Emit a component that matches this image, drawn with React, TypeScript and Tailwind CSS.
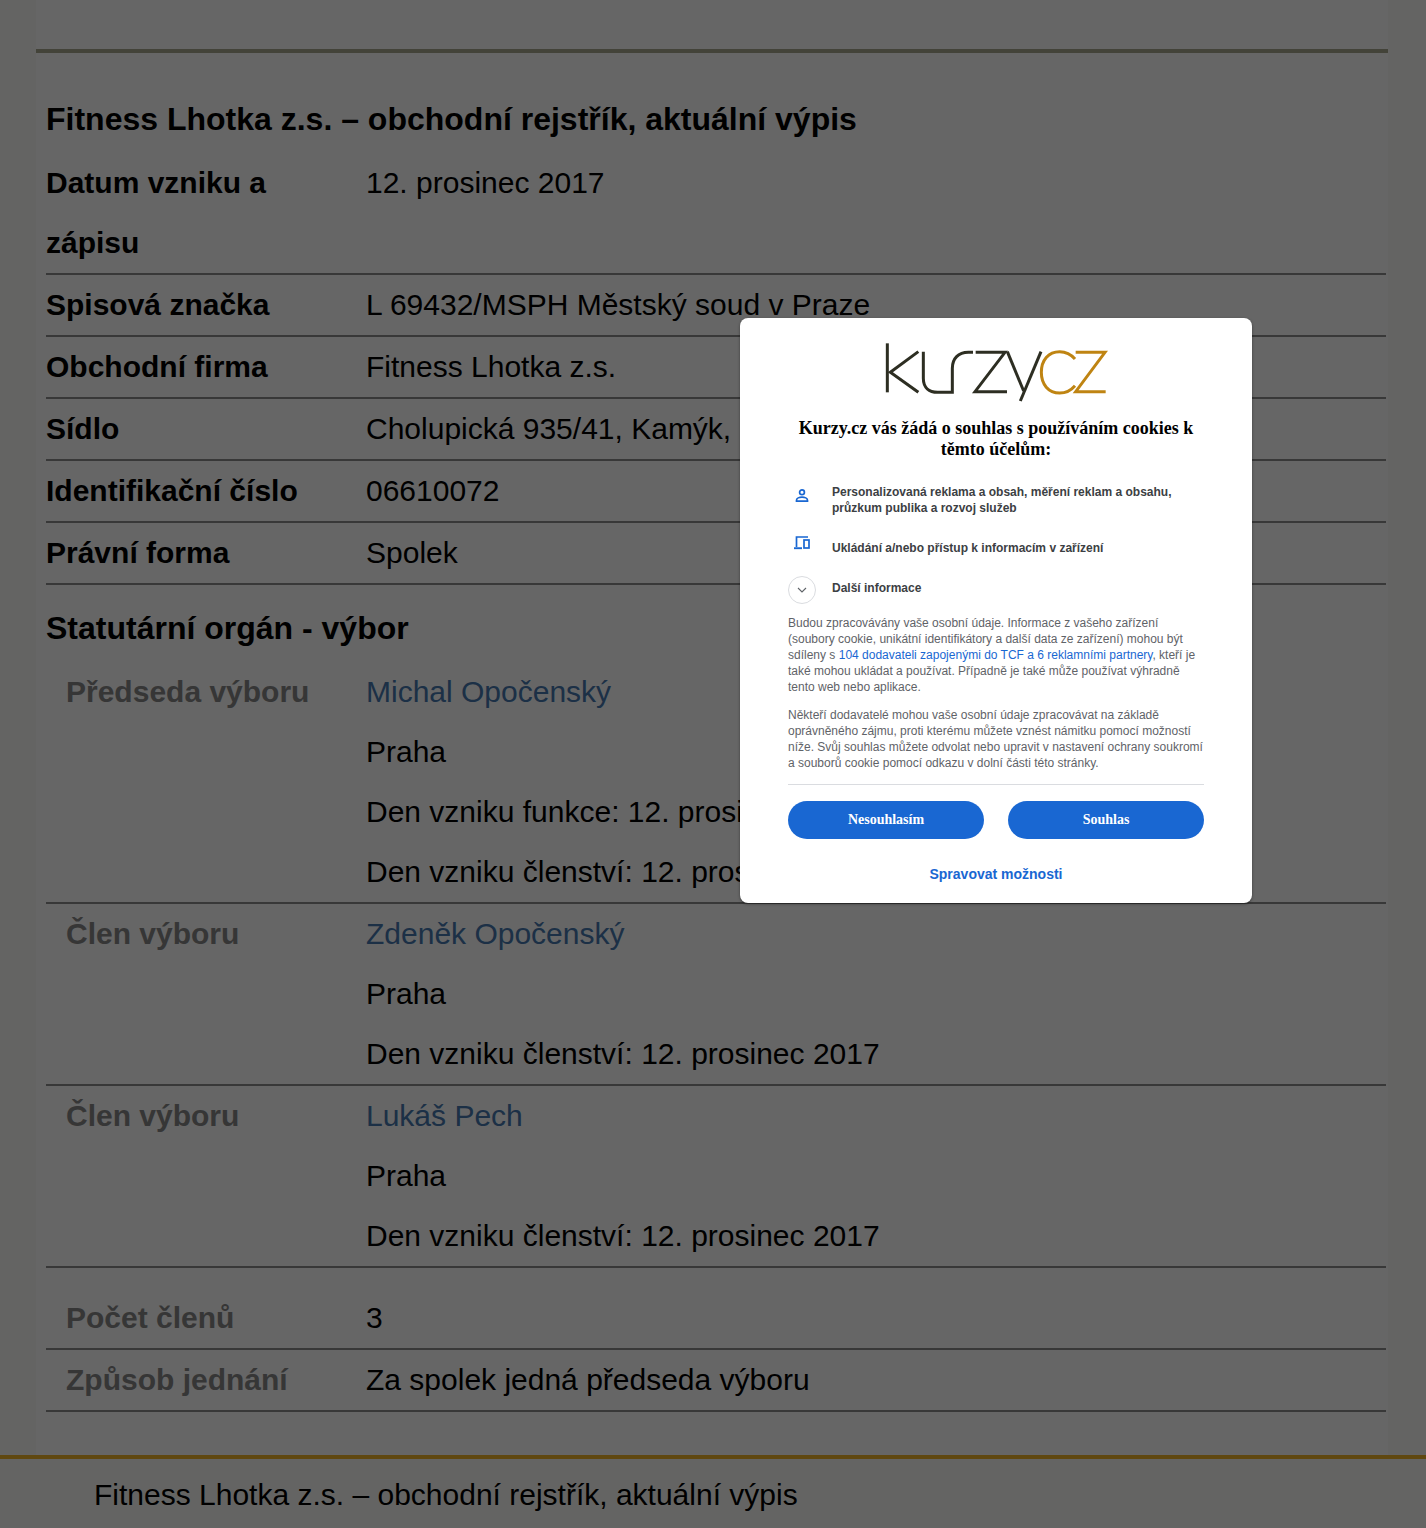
const sans = "font-['Liberation_Sans',Arial,sans-serif]";

function Row({ label, sub, children }: { label: string; sub?: boolean; children: React.ReactNode }) {
  return (
    <div className="flex border-b-2 border-[#8c8c8c]">
      <div className={`w-[320px] shrink-0 font-bold ${sub ? 'pl-5 text-[#888888]' : 'text-black'}`}>{label}</div>
      <div className="min-w-0 flex-1">{children}</div>
    </div>
  );
}

function Person({ name, funkce, clenstvi }: { name: string; funkce?: string; clenstvi: string }) {
  return (
    <>
      <div className="text-[#4678b0]">{name}</div>
      <div>Praha</div>
      {funkce && <div>Den vzniku funkce: {funkce}</div>}
      <div>Den vzniku členství: {clenstvi}</div>
    </>
  );
}

function Logo() {
  return (
    <svg width="240" height="75" viewBox="0 0 720 225" fill="none" strokeWidth="9" className="block">
      <g stroke="#2d2e22">
        <path d="M37 25V172" />
        <path d="M130 50 46 112 130 172" />
        <path d="M145 50V130C145 158 162 172 188 172H232V100C232 70 250 52 280 52H294" />
        <path d="M302 52H390L300 170H396" />
        <path d="M397 50 446 168" />
        <path d="M498 50 436 198" />
      </g>
      <g stroke="#bf8412">
        <path d="M600 72C588 58 572 50 554 50 520 50 499 76 499 112S520 174 554 174C572 174 588 166 600 152" />
        <path d="M602 52H690L602 170H692" />
      </g>
    </svg>
  );
}

export default function App() {
  return (
    <div className={`relative h-[1528px] overflow-hidden bg-[#fbfbf8] text-[30px] leading-[60px] text-black ${sans}`}>
      <div className="ml-9 mr-[38px] h-[1455px] bg-white pt-[49px]">
        <div className="h-1 bg-[#a9a98f]" />
        <div className="pl-2.5 pr-0.5 pt-[36px]">
          <div className="h-[60px] text-[32px] font-bold">Fitness Lhotka z.s. – obchodní rejstřík, aktuální výpis</div>
          <div className="mt-[4px]">
            <Row label="Datum vzniku a zápisu">12. prosinec 2017</Row>
            <Row label="Spisová značka">L 69432/MSPH Městský soud v Praze</Row>
            <Row label="Obchodní firma">Fitness Lhotka z.s.</Row>
            <Row label="Sídlo">Cholupická 935/41, Kamýk, 142 00 Praha 4</Row>
            <Row label="Identifikační číslo">06610072</Row>
            <Row label="Právní forma">Spolek</Row>
          </div>
          <div className="h-[60px] pt-[13px] text-[32px] font-bold">Statutární orgán - výbor</div>
          <div className="mt-[17px]">
            <Row sub label="Předseda výboru">
              <Person name="Michal Opočenský" funkce="12. prosinec 2017" clenstvi="12. prosinec 2017" />
            </Row>
            <Row sub label="Člen výboru">
              <Person name="Zdeněk Opočenský" clenstvi="12. prosinec 2017" />
            </Row>
            <Row sub label="Člen výboru">
              <Person name="Lukáš Pech" clenstvi="12. prosinec 2017" />
            </Row>
            <div className="h-5" />
            <Row sub label="Počet členů">3</Row>
            <Row sub label="Způsob jednání">Za spolek jedná předseda výboru</Row>
          </div>
        </div>
      </div>
      <div className="h-1 bg-[#f0b429]" />
      <div className="pl-[94px] pt-[6px]">Fitness Lhotka z.s. – obchodní rejstřík, aktuální výpis</div>

      {/* overlay + consent dialog */}
      <div className="absolute inset-0 bg-black/60">
        <div className="absolute left-[740px] top-[318px] w-[512px] rounded-lg bg-white px-12 pb-[21px] pt-[17px] shadow-[0_1px_3px_rgba(0,0,0,0.4)]">
          <div className="-ml-[3px] flex justify-center"><Logo /></div>
          <h1 className="mt-[8px] text-center font-['Liberation_Serif',serif] text-[18px] font-bold leading-[21px] text-black">
            Kurzy.cz vás žádá o souhlas s používáním cookies k těmto účelům:
          </h1>
          <div className="mt-[24px] flex text-[12px] font-bold leading-4 text-[#3c4043]">
            <div className="flex w-11 shrink-0 pl-[6px] pt-[4px]">
              <svg width="16" height="16" viewBox="0 0 16 16" fill="none" stroke="#1967d2" strokeWidth="1.7">
                <circle cx="8" cy="4.2" r="2.4" />
                <path d="M2.5 13.2v-1c0-1.8 2.8-3 5.500-3s5.500 1.200 5.500 3v1z" />
              </svg>
            </div>
            <div>Personalizovaná reklama a obsah, měření reklam a obsahu, průzkum publika a rozvoj služeb</div>
          </div>
          <div className="mt-[24px] flex text-[12px] font-bold leading-4 text-[#3c4043]">
            <div className="w-11 shrink-0 -translate-y-[5px] pl-[5px]">
              <svg width="18" height="16" viewBox="0 0 18 16" fill="none" stroke="#1967d2" strokeWidth="1.7">
                <path d="M15 2H3.500v10" />
                <path d="M1 13.200h8" strokeWidth="1.900" />
                <rect x="11" y="5" width="5" height="8" />
              </svg>
            </div>
            <div>Ukládání a/nebo přístup k informacím v zařízení</div>
          </div>
          <div className="mt-[23px] flex text-[12px] font-bold leading-4 text-[#3c4043]">
            <div className="w-11 shrink-0 -translate-y-[3px]">
              <div className="flex h-7 w-7 items-center justify-center rounded-full border border-[#dadce0]">
                <svg width="10" height="6" viewBox="0 0 10 6" fill="none" stroke="#5f6368" strokeWidth="1.100">
                  <path d="M1 1l4 4 4-4" />
                </svg>
              </div>
            </div>
            <div className="pt-[1px]">Další informace</div>
          </div>
          <p className="mt-[8px] text-[12px] leading-4 text-[#5f6368]">
            Budou zpracovávány vaše osobní údaje. Informace z vašeho zařízení (soubory cookie, unikátní identifikátory a další data ze zařízení) mohou být sdíleny s{' '}
            <span className="text-[#1967d2]">104 dodavateli zapojenými do TCF a 6 reklamními partnery</span>, kteří je také mohou ukládat a používat. Případně je také může používat výhradně tento web nebo aplikace.
          </p>
          <p className="mt-3 text-[12px] leading-4 text-[#5f6368]">
            Někteří dodavatelé mohou vaše osobní údaje zpracovávat na základě oprávněného zájmu, proti kterému můžete vznést námitku pomocí možností níže. Svůj souhlas můžete odvolat nebo upravit v nastavení ochrany soukromí a souborů cookie pomocí odkazu v dolní části této stránky.
          </p>
          <div className="mt-[13px] h-px bg-[#dadce0]" />
          <div className="mt-4 flex gap-6">
            <button className="h-[38px] flex-1 rounded-full bg-[#1967d2] font-['Liberation_Serif',serif] text-[14px] font-bold leading-4 text-white">Nesouhlasím</button>
            <button className="h-[38px] flex-1 rounded-full bg-[#1967d2] font-['Liberation_Serif',serif] text-[14px] font-bold leading-4 text-white">Souhlas</button>
          </div>
          <div className="mt-[27px] text-center text-[14px] font-bold leading-4 text-[#1967d2]">Spravovat možnosti</div>
        </div>
      </div>
    </div>
  );
}
